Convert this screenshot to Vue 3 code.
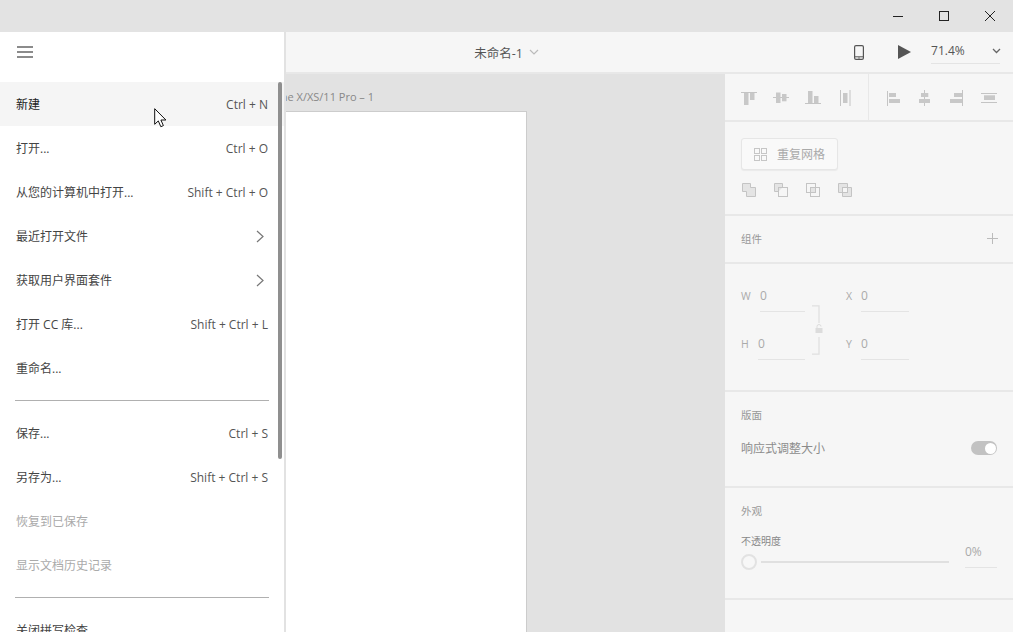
<script setup>
const firstGroup = [
  { label: '新建', keys: 'Ctrl + N', hover: true },
  { label: '打开...', keys: 'Ctrl + O' },
  { label: '从您的计算机中打开...', keys: 'Shift + Ctrl + O' },
  { label: '最近打开文件', arrow: true },
  { label: '获取用户界面套件', arrow: true },
  { label: '打开 CC 库...', keys: 'Shift + Ctrl + L' },
  { label: '重命名...' }
]
const secondGroup = [
  { label: '保存...', keys: 'Ctrl + S' },
  { label: '另存为...', keys: 'Shift + Ctrl + S' },
  { label: '恢复到已保存', disabled: true },
  { label: '显示文档历史记录', disabled: true }
]
const thirdGroup = [{ label: '关闭拼写检查' }]
const groups = [firstGroup, secondGroup, thirdGroup]
</script>

<template>
  <div class="app">
    <header class="titlebar">
      <button class="win-btn">
        <svg width="12" height="12" viewBox="0 0 12 12"><path d="M1 6.500h10" stroke="#222" fill="none" /></svg>
      </button>
      <button class="win-btn">
        <svg width="12" height="12" viewBox="0 0 12 12"><rect x="1.500" y="1.500" width="9" height="9" stroke="#222" fill="none" /></svg>
      </button>
      <button class="win-btn">
        <svg width="12" height="12" viewBox="0 0 12 12"><path d="M1 1l10 10M11 1L1 11" stroke="#222" fill="none" /></svg>
      </button>
    </header>

    <div class="workspace">
      <div class="toolbar">
        <div class="toolbar-side"></div>
        <div class="doc-title">
          <span>未命名-1</span>
          <svg width="10" height="6" viewBox="0 0 10 6"><path d="M1 1l4 4 4-4" stroke="#bbb" stroke-width="1.200" fill="none" /></svg>
        </div>
        <div class="toolbar-side toolbar-right">
          <svg class="phone" width="10" height="15" viewBox="0 0 10 15">
            <rect x="0.600" y="0.600" width="8.800" height="13.800" rx="1.400" fill="none" stroke="#555" stroke-width="1.200" />
            <path d="M1 11.800h8" stroke="#555" />
            <circle cx="5" cy="13" r="0.700" fill="#555" />
          </svg>
          <svg class="play" width="13" height="14" viewBox="0 0 13 14"><path d="M0 0l13 7-13 7z" fill="#555" /></svg>
          <div class="zoom-box">
            <span>71.4%</span>
            <svg width="9" height="6" viewBox="0 0 9 6"><path d="M1 1l3.500 3.500L8 1" stroke="#666" stroke-width="1.300" fill="none" /></svg>
          </div>
        </div>
      </div>

      <div class="content">
        <main class="canvas">
          <div class="board-label">iPhone X/XS/11 Pro – 1</div>
          <div class="artboard"></div>
        </main>

        <aside class="panel">
          <section class="sec sec-align">
            <div class="icon-group">
              <svg width="16" height="16" viewBox="0 0 16 16"><path d="M0 2.500h16" stroke="#c4c4c4" /><rect x="3" y="3" width="4.500" height="12" fill="#c8c8c8" /><rect x="9" y="3" width="4.500" height="7" fill="#c8c8c8" /></svg>
              <svg width="16" height="16" viewBox="0 0 16 16"><path d="M0 7.500h16" stroke="#c4c4c4" /><rect x="3" y="2.500" width="4.500" height="10.500" fill="#c8c8c8" /><rect x="9" y="4" width="4.500" height="7.300" fill="#c8c8c8" /></svg>
              <svg width="16" height="16" viewBox="0 0 16 16"><path d="M0 13.500h16" stroke="#c4c4c4" /><rect x="3" y="1" width="4.500" height="12" fill="#c8c8c8" /><rect x="9" y="6" width="4.500" height="7" fill="#c8c8c8" /></svg>
              <svg width="16" height="16" viewBox="0 0 16 16"><path d="M3.500 0v16M13 0v16" stroke="#c4c4c4" /><rect x="6" y="3" width="4.500" height="10" fill="#c8c8c8" /></svg>
            </div>
            <div class="icon-group icon-group-right">
              <svg width="16" height="16" viewBox="0 0 16 16"><path d="M2.500 1v15" stroke="#c4c4c4" /><rect x="4" y="3" width="7" height="4" fill="#c8c8c8" /><rect x="4" y="9" width="11" height="4" fill="#c8c8c8" /></svg>
              <svg width="16" height="16" viewBox="0 0 16 16"><path d="M7.500 0v16" stroke="#c4c4c4" /><rect x="4" y="3" width="7.300" height="4" fill="#c8c8c8" /><rect x="2" y="9" width="11" height="4" fill="#c8c8c8" /></svg>
              <svg width="16" height="16" viewBox="0 0 16 16"><path d="M13.500 0v16" stroke="#c4c4c4" /><rect x="5" y="3" width="8" height="4" fill="#c8c8c8" /><rect x="1" y="9" width="12" height="4" fill="#c8c8c8" /></svg>
              <svg width="16" height="16" viewBox="0 0 16 16"><path d="M0 3.500h16M0 12.500h16" stroke="#c4c4c4" /><rect x="3" y="5.300" width="11" height="4.700" fill="#c8c8c8" /></svg>
            </div>
          </section>

          <section class="sec sec-bool">
            <button class="grid-btn">
              <svg width="13" height="13" viewBox="0 0 13 13" fill="none" stroke="#c6c6c6">
                <rect x="0.500" y="0.500" width="5" height="5" />
                <rect x="7.500" y="0.500" width="5" height="5" />
                <rect x="0.500" y="7.500" width="5" height="5" />
                <rect x="7.500" y="7.500" width="5" height="5" />
              </svg>
              <span>重复网格</span>
            </button>
            <div class="bool-row">
              <svg width="16" height="16" viewBox="0 0 16 16"><path d="M1.500 1.500h8v4h5v9h-9v-5h-4z" fill="#e4e4e4" stroke="#c4c4c4" /></svg>
              <svg width="16" height="16" viewBox="0 0 16 16"><path d="M5.500 9.500h-4v-8h8v4" fill="#e4e4e4" stroke="#c4c4c4" /><rect x="5.500" y="5.500" width="9" height="9" fill="none" stroke="#c4c4c4" /></svg>
              <svg width="16" height="16" viewBox="0 0 16 16"><rect x="1.500" y="1.500" width="9" height="9" fill="none" stroke="#c4c4c4" /><rect x="5.500" y="5.500" width="9" height="9" fill="none" stroke="#c4c4c4" /><rect x="6" y="6" width="4" height="4" fill="#e4e4e4" /></svg>
              <svg width="16" height="16" viewBox="0 0 16 16"><path d="M1.500 1.500h9v4h-5v5h-4z" fill="#e4e4e4" stroke="#c4c4c4" /><path d="M10.500 5.500h4v9h-9v-4h5z" fill="#e4e4e4" stroke="#c4c4c4" /><rect x="5.500" y="5.500" width="5" height="5" fill="#f6f6f6" stroke="#c4c4c4" /></svg>
            </div>
          </section>

          <section class="sec sec-comp">
            <span class="sec-title">组件</span>
            <svg width="11" height="11" viewBox="0 0 11 11"><path d="M5.500 0v11M0 5.500h11" stroke="#bbb" fill="none" /></svg>
          </section>

          <section class="sec sec-transform">
            <div class="field">
              <span class="f-label">W</span><span class="f-input f-w">0</span>
            </div>
            <div class="field">
              <span class="f-label f-label-x">X</span><span class="f-input f-x">0</span>
            </div>
            <div class="field">
              <span class="f-label f-label-h">H</span><span class="f-input f-w f-tight">0</span>
            </div>
            <div class="field">
              <span class="f-label f-label-x">Y</span><span class="f-input f-x">0</span>
            </div>
            <svg class="lock" width="11" height="50" viewBox="0 0 11 50" fill="none">
              <path d="M0 .8h7V18M0 49.200h7V32" stroke="#e0e0e0" stroke-width="1.300" />
              <rect x="3.500" y="23" width="7" height="5" fill="#dcdcdc" />
              <path d="M5 23v-1.500a2 2 0 0 1 4 0" stroke="#dcdcdc" />
            </svg>
          </section>

          <section class="sec sec-layout">
            <span class="sec-title">版面</span>
            <div class="toggle-row">
              <span class="toggle-label">响应式调整大小</span>
              <span class="toggle"><i></i></span>
            </div>
          </section>

          <section class="sec sec-look">
            <span class="sec-title">外观</span>
            <div class="opacity-row">
              <div class="opacity-main">
                <span class="opacity-label">不透明度</span>
                <div class="slider"><i class="knob"></i><i class="track"></i></div>
              </div>
              <span class="percent">0%</span>
            </div>
          </section>
        </aside>
      </div>
    </div>

    <nav class="menu">
      <div class="menu-head">
        <svg width="16" height="12" viewBox="0 0 16 12"><path d="M0 1h16M0 6h16M0 11h16" stroke="#666" stroke-width="1.700" fill="none" /></svg>
      </div>
      <div v-for="(group, g) in groups" :key="g" class="menu-group">
        <div
          v-for="item in group"
          :key="item.label"
          class="menu-item"
          :class="{ hover: item.hover, disabled: item.disabled }"
        >
          <span class="item-label">{{ item.label }}</span>
          <span v-if="item.keys" class="item-keys">{{ item.keys }}</span>
          <svg v-if="item.arrow" class="item-arrow" width="8" height="13" viewBox="0 0 8 13"><path d="M1 1l6 5.500L1 12" stroke="#777" stroke-width="1.200" fill="none" /></svg>
        </div>
      </div>
      <div class="scrollbar"></div>
    </nav>

    <svg class="cursor" width="13" height="20" viewBox="0 0 13 20">
      <path d="M.7.700v15.600l3.600-3.400 2.500 5.800 2.600-1.100-2.500-5.600h5z" fill="#fff" stroke="#111" stroke-width="1" />
    </svg>
  </div>
</template>

<style>
html, body { margin: 0; height: 100%; overflow: hidden; }
</style>

<style scoped>
.app {
  position: relative;
  display: flex;
  flex-direction: column;
  height: 632px;
  overflow: hidden;
  font-family: "Open Sans", "Noto Sans CJK SC", sans-serif;
  font-size: 12px;
  color: #333;
  background: #e2e2e2;
}
.titlebar {
  height: 32px;
  flex: none;
  display: flex;
  justify-content: flex-end;
  align-items: center;
  background: #e3e3e3;
}
.win-btn {
  width: 46px;
  height: 32px;
  padding: 0;
  border: 0;
  background: none;
  display: flex;
  align-items: center;
  justify-content: center;
}
.workspace { flex: 1; display: flex; flex-direction: column; min-height: 0; }
.toolbar {
  height: 42px;
  flex: none;
  box-sizing: border-box;
  display: flex;
  align-items: center;
  background: #f6f6f6;
  border-bottom: 2px solid #e8e8e8;
}
.toolbar-side { flex: 1; display: flex; align-items: center; }
.toolbar-right { justify-content: flex-end; }
.doc-title {
  display: flex;
  align-items: center;
  gap: 6px;
  font-size: 12.500px;
  color: #555;
}
.phone { margin-right: 34px; }
.play { margin-right: 20px; }
.zoom-box {
  width: 69px;
  height: 24px;
  margin-right: 13px;
  box-sizing: border-box;
  display: flex;
  align-items: center;
  justify-content: space-between;
  padding: 0 0 3px 0;
  border-bottom: 1px solid #e4e4e4;
  color: #555;
}
.zoom-box svg { margin-top: 2px; margin-right: -1px; }
.content { flex: 1; display: flex; min-height: 0; }
.canvas {
  flex: 1;
  padding: 16px 0 0 258px;
  overflow: hidden;
}
.board-label {
  height: 14px;
  line-height: 14px;
  margin-bottom: 7px;
  font-size: 11px;
  color: #888;
}
.artboard {
  box-sizing: border-box;
  width: 269px;
  height: 640px;
  background: #fff;
  border: 1px solid #ccc;
}
.panel {
  width: 288px;
  flex: none;
  background: #f6f6f6;
  color: #999;
}
.sec {
  box-sizing: border-box;
  border-bottom: 2px solid #e8e8e8;
  padding-left: 16px;
  padding-right: 16px;
}
.sec-align { height: 48px; display: flex; align-items: center; padding-top: 2px; position: relative; }
.icon-group { display: flex; gap: 16px; flex: none; }
.icon-group-right { margin-left: 32px; }
.sec-align::after {
  content: "";
  position: absolute;
  left: 143px;
  top: 0;
  bottom: 0;
  width: 1px;
  background: #e8e8e8;
}
.sec-bool { height: 94px; padding-top: 16px; }
.grid-btn {
  width: 97px;
  height: 32px;
  box-sizing: border-box;
  display: flex;
  align-items: center;
  gap: 10px;
  padding: 0 0 0 12px;
  background: #f9f9f9;
  border: 1px solid #e6e6e6;
  border-radius: 3px;
  box-shadow: 0 1px 1px rgba(0, 0, 0, 0.05);
  color: #aaa;
  font: inherit;
}
.bool-row { display: flex; gap: 16px; margin-top: 12px; }
.sec-comp {
  height: 48px;
  display: flex;
  align-items: center;
  justify-content: space-between;
  padding-bottom: 2px;
}
.sec-comp svg { margin-right: -1px; }
.sec-title { font-size: 10.500px; color: #999; }
.sec-transform {
  position: relative;
  height: 128px;
  padding-top: 18px;
  display: grid;
  grid-template-columns: 105px 64px;
  grid-auto-rows: 48px;
  align-content: start;
}
.field { display: flex; align-items: flex-start; height: 30px; }
.f-label { width: 19px; font-size: 10.500px; color: #aaa; line-height: 28px; }
.f-label-x { width: 15px; }
.f-label-h { width: 17px; }
.f-input {
  height: 30px;
  line-height: 28px;
  box-sizing: border-box;
  color: #aaa;
  border-bottom: 1px solid #e4e4e4;
}
.f-w { width: 45px; }
.f-tight { width: 47px; }
.f-x { width: 48px; }
.lock { position: absolute; left: 87px; top: 41px; }
.sec-layout { height: 96px; padding-top: 15px; display: flex; flex-direction: column; align-items: stretch; }
.toggle-row { display: flex; align-items: center; justify-content: space-between; margin-top: 17px; }
.toggle-label { color: #8c8c8c; }
.toggle {
  width: 26px;
  height: 14px;
  border-radius: 7px;
  background: #c2c2c2;
  display: flex;
  justify-content: flex-end;
  align-items: center;
  padding: 0 1px;
  box-sizing: border-box;
}
.toggle i { width: 11px; height: 11px; border-radius: 50%; background: #fff; }
.sec-look { height: 112px; padding-top: 15px; display: flex; flex-direction: column; }
.opacity-row { display: flex; align-items: flex-start; margin-top: 16px; }
.opacity-main { flex: 1; min-width: 0; }
.opacity-label { display: block; font-size: 10px; color: #888; line-height: 14px; }
.slider { display: flex; align-items: center; margin-top: 6px; width: 208px; }
.knob {
  width: 16px;
  height: 16px;
  box-sizing: border-box;
  border-radius: 50%;
  border: 2px solid #e2e2e2;
  background: #f7f7f7;
}
.track { width: 188px; height: 2px; margin-left: 4px; background: #e0e0e0; }
.percent {
  width: 32px;
  height: 26px;
  line-height: 20px;
  margin-top: 8px;
  box-sizing: border-box;
  border-bottom: 1px solid #e4e4e4;
  color: #aaa;
}
.menu {
  position: absolute;
  left: 0;
  top: 32px;
  bottom: 0;
  width: 286px;
  box-sizing: border-box;
  background: #fff;
  border-right: 2px solid #e2e2e2;
  overflow: hidden;
}
.menu-head {
  height: 50px;
  box-sizing: border-box;
  display: flex;
  align-items: center;
  padding: 0 0 10px 17px;
}
.menu-group + .menu-group { position: relative; margin-top: 21px; }
.menu-group + .menu-group::before {
  content: "";
  position: absolute;
  left: 15px;
  right: 15px;
  top: -11px;
  height: 1px;
  background: #b0b0b0;
}
.menu-item {
  height: 44px;
  display: flex;
  align-items: center;
  justify-content: space-between;
  padding: 0 16px;
  color: #444;
}
.menu-item.hover { background: #f5f5f5; color: #222; }
.menu-item.disabled { color: #aaa; }
.item-keys { color: #555; }
.item-arrow { margin-right: 4px; }
.scrollbar {
  position: absolute;
  left: 278px;
  top: 50px;
  width: 4px;
  height: 377px;
  border-radius: 2px;
  background: #8f8f8f;
}
.cursor { position: absolute; left: 154px; top: 108px; }
</style>
